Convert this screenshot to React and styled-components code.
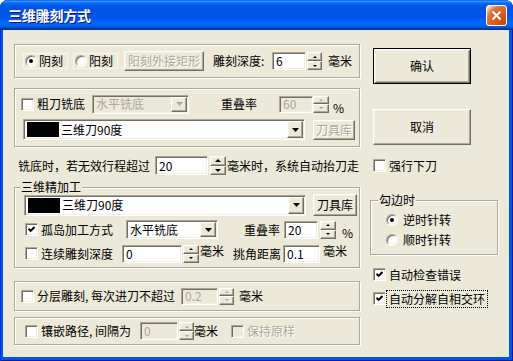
import React from 'react'
import styled, { createGlobalStyle, css } from 'styled-components'

const FONT = `"Noto Sans CJK SC", "Noto Sans", sans-serif`

const GlobalStyle = createGlobalStyle`
  html, body {
    margin: 0;
    padding: 0;
    background: #ffffff;
  }
  body {
    font-family: ${FONT};
    font-size: 12px;
  }
  * {
    box-sizing: border-box;
  }
`

// shared bits
const place = css`
  flex-shrink: 0;
  margin-left: ${p => p.$ml || 0}px;
  margin-top: ${p => p.$mt || 0}px;
`

const sunken = css`
  border: 1px solid;
  border-color: #aca899 #ffffff #ffffff #aca899;
  box-shadow: inset 1px 1px 0 #716f64, inset -1px -1px 0 #f1efe2;
`

const raised = css`
  border: 1px solid;
  border-color: #ffffff #716f64 #716f64 #ffffff;
  box-shadow: inset -1px -1px 0 #aca899, inset 1px 1px 0 #f1efe2;
`

const Window = styled.div`
  width: 513px;
  height: 361px;
  display: flex;
  flex-direction: column;
  background: #0055ea;
  border-radius: 8px 8px 0 0;
  box-shadow: inset 1px 0 0 #0831d9, inset -1px 0 0 #001ea0, inset 0 -1px 0 #001ea0;
  overflow: hidden;
`

const TitleBar = styled.div`
  height: 30px;
  flex-shrink: 0;
  display: flex;
  align-items: center;
  justify-content: space-between;
  padding: 0 6px 0 8px;
  background: linear-gradient(
    to bottom,
    #0058ee 0%,
    #3a93ff 4%,
    #288eff 6%,
    #127dff 8%,
    #036ffc 10%,
    #0262ee 14%,
    #0057e5 20%,
    #0054e3 24%,
    #0055eb 56%,
    #005bf5 66%,
    #026afe 76%,
    #0062ef 86%,
    #0052d6 92%,
    #0040ab 94%,
    #003092 100%
  );
`

const Title = styled.span`
  color: #ffffff;
  font-size: 14px;
  font-weight: 700;
  line-height: 16px;
  letter-spacing: -0.2px;
  text-shadow: 1px 1px 0 #0f1089;
`

const CloseButton = styled.span`
  width: 21px;
  height: 21px;
  border: 1px solid #ffffff;
  border-radius: 3px;
  background: radial-gradient(circle at 90% 90%, #cc4600 0%, #dc6527 55%, #cd7546 70%, #ffccb2 90%, #ffffff 100%);
  display: flex;
  align-items: center;
  justify-content: center;
`

const Client = styled.div`
  flex: 1;
  margin: 0 4px 4px 3px;
  background: #ece9d8;
  display: flex;
`

const LeftCol = styled.div`
  width: 346px;
  margin-left: 11px;
  display: flex;
  flex-direction: column;
`

const RightCol = styled.div`
  width: 128px;
  margin-left: 10px;
  display: flex;
  flex-direction: column;
`

const Group = styled.div`
  ${place};
  position: relative;
  height: ${p => p.$h}px;
  width: 100%;
  border: 1px solid #aca899;
  box-shadow: inset 1px 1px 0 #ffffff, 1px 1px 0 #ffffff;
  display: flex;
  flex-direction: column;
`

const Legend = styled.span`
  position: absolute;
  top: -7px;
  left: ${p => p.$left || 5}px;
  padding: 0 1px;
  background: #ece9d8;
  line-height: 12px;
  font-size: 12px;
  color: #000000;
  white-space: nowrap;
`

const Row = styled.div`
  ${place};
  display: flex;
  align-items: center;
  height: ${p => p.$h}px;
`

const Text = styled.span`
  flex-shrink: 0;
  width: ${p => (p.$w ? `${p.$w}px` : 'auto')};
  margin: ${p => (p.$dy > 0 ? p.$dy * 2 : 0)}px 0 ${p => (p.$dy < 0 ? -p.$dy * 2 : 0)}px ${p => p.$ml || 0}px;
  font-size: 12px;
  line-height: 12px;
  white-space: nowrap;
  color: ${p => (p.$disabled ? '#aca899' : '#000000')};
  text-shadow: ${p => (p.$disabled ? '1px 1px 0 #ffffff' : 'none')};
  ${p =>
    p.$focus &&
    css`
      outline: 1px dotted #000000;
      outline-offset: 2px;
    `}
`

const Option = styled.span`
  ${place};
  width: ${p => p.$w}px;
  height: 16px;
  display: flex;
  align-items: center;
  padding: 0 1px;
  border: 1px solid #f8f7f1;
`

const RadioDot = styled.span`
  ${place};
  width: 12px;
  height: 12px;
  border-radius: 50%;
  border: 1px solid;
  border-color: #aca899 #ffffff #ffffff #aca899;
  box-shadow: inset 1px 1px 0 #716f64, inset -1px -1px 0 #f1efe2;
  background: #ffffff;
  display: flex;
  align-items: center;
  justify-content: center;

  &::after {
    content: '';
    width: 4px;
    height: 4px;
    border-radius: 50%;
    background: ${p => (p.$on ? '#000000' : 'transparent')};
  }
`

const CheckBox = styled.span`
  ${place};
  width: 13px;
  height: 13px;
  ${sunken};
  background: ${p => (p.$disabled ? '#ece9d8' : '#ffffff')};
  display: flex;
  align-items: center;
  justify-content: center;
`

const Edit = styled.span`
  ${place};
  width: ${p => p.$w}px;
  height: ${p => p.$h}px;
  ${sunken};
  background: ${p => (p.$disabled ? '#ece9d8' : '#ffffff')};
  color: ${p => (p.$disabled ? '#aca899' : '#000000')};
  display: flex;
  align-items: center;
  padding-left: 3px;
  font-size: 12px;
  line-height: 12px;
`

const SpinBox = styled.span`
  ${place};
  width: ${p => p.$w || 16}px;
  height: ${p => p.$h}px;
  display: flex;
  flex-direction: column;
`

const SpinHalf = styled.span`
  flex: 1;
  ${raised};
  background: #ece9d8;
  display: flex;
  align-items: center;
  justify-content: center;
`

const Arrow = styled.span`
  width: 0;
  height: 0;
  border-left: ${p => p.$s}px solid transparent;
  border-right: ${p => p.$s}px solid transparent;
  ${p =>
    p.$up
      ? css`
          border-bottom: ${p.$s}px solid ${p.$c};
        `
      : css`
          border-top: ${p.$s}px solid ${p.$c};
        `}
`

const Button = styled.span`
  ${place};
  width: ${p => p.$w}px;
  height: ${p => p.$h}px;
  ${raised};
  background: #ece9d8;
  display: flex;
  align-items: center;
  justify-content: center;
  font-size: 12px;
  line-height: 12px;
  color: ${p => (p.$disabled ? '#aca899' : '#000000')};
  text-shadow: ${p => (p.$disabled ? '1px 1px 0 #ffffff' : 'none')};
  ${p =>
    p.$default &&
    css`
      border-color: #000000;
      box-shadow: inset 1px 1px 0 #ffffff, inset -1px -1px 0 #716f64, inset 2px 2px 0 #f1efe2,
        inset -2px -2px 0 #aca899;
    `}
`

const Combo = styled.span`
  ${place};
  width: ${p => p.$w}px;
  height: ${p => p.$h}px;
  ${sunken};
  background: ${p => (p.$disabled ? '#ece9d8' : '#ffffff')};
  padding: 1px;
  display: flex;
  align-items: center;
`

const ComboText = styled.span`
  flex: 1;
  padding-left: 2px;
  font-size: 12px;
  line-height: 12px;
  white-space: nowrap;
  color: ${p => (p.$disabled ? '#aca899' : '#000000')};
`

const Swatch = styled.span`
  width: 32px;
  height: 15px;
  margin-left: 2px;
  background: #000000;
  flex-shrink: 0;
`

const DropButton = styled.span`
  width: 16px;
  align-self: stretch;
  flex-shrink: 0;
  ${raised};
  background: #ece9d8;
  display: flex;
  align-items: center;
  justify-content: center;
`

const Radio = ({ on, ml, children, textMl = 2 }) => (
  <>
    <RadioDot $on={on} $ml={ml} />
    <Text $ml={textMl}>{children}</Text>
  </>
)

const Check = ({ on, disabled, ml }) => (
  <CheckBox $disabled={disabled} $ml={ml}>
    {on && (
      <svg width="7" height="7" viewBox="0 0 7 7">
        <path d="M0.5 2.8 L2.6 4.9 L6.5 1" stroke="#000" strokeWidth="2" fill="none" />
      </svg>
    )}
  </CheckBox>
)

const Spin = ({ h, w, ml, disabled }) => {
  const c = disabled ? '#aca899' : '#000000'
  const s = h >= 19 ? 3 : 2
  return (
    <SpinBox $h={h} $w={w} $ml={ml}>
      <SpinHalf>
        <Arrow $up $s={s} $c={c} />
      </SpinHalf>
      <SpinHalf>
        <Arrow $s={s} $c={c} />
      </SpinHalf>
    </SpinBox>
  )
}

const DownArrow = ({ disabled }) => (
  <svg width="7" height="4" viewBox="0 0 7 4">
    <path d="M0 0 H7 L3.5 4 Z" fill={disabled ? '#aca899' : '#000'} />
  </svg>
)

const Select = ({ w, h, ml, disabled, children }) => (
  <Combo $w={w} $h={h} $ml={ml} $disabled={disabled}>
    <ComboText $disabled={disabled}>{children}</ComboText>
    <DropButton>
      <DownArrow disabled={disabled} />
    </DropButton>
  </Combo>
)

const ToolSelect = ({ ml }) => (
  <Combo $w={282} $h={21} $ml={ml}>
    <Swatch />
    <ComboText>三维刀90度</ComboText>
    <DropButton>
      <DownArrow />
    </DropButton>
  </Combo>
)

export default function App() {
  return (
    <>
      <GlobalStyle />
      <Window>
        <TitleBar>
          <Title>三维雕刻方式</Title>
          <CloseButton>
            <svg width="11" height="11" viewBox="0 0 11 11">
              <path d="M1.5 1.5 L9.5 9.5 M9.5 1.5 L1.5 9.5" stroke="#fff" strokeWidth="2" />
            </svg>
          </CloseButton>
        </TitleBar>
        <Client>
          <LeftCol>
            <Group $h={34} $mt={14}>
              <Row $h={32}>
                <Option $ml={8} $w={45}>
                  <Radio on>阴刻</Radio>
                </Option>
                <Option $ml={5} $w={45}>
                  <Radio>阳刻</Radio>
                </Option>
                <Button $ml={6} $w={80} $h={20} $disabled>
                  阳刻外接矩形
                </Button>
                <Text $ml={9} $w={56}>
                  雕刻深度:
                </Text>
                <Edit $ml={3} $w={34} $h={18}>
                  6
                </Edit>
                <Spin ml={1} w={15} h={18} />
                <Text $ml={6}>毫米</Text>
              </Row>
            </Group>

            <Group $h={59} $mt={10}>
              <Row $h={20} $mt={5}>
                <Check ml={6} />
                <Text $ml={3} $w={48}>
                  粗刀铣底
                </Text>
                <Select ml={7} w={97} h={19} disabled>
                  水平铣底
                </Select>
                <Text $ml={32} $w={36}>
                  重叠率
                </Text>
                <Edit $ml={22} $w={34} $h={17} $disabled>
                  60
                </Edit>
                <Spin ml={0} w={16} h={17} disabled />
                <Text $ml={4} $dy={4}>
                  %
                </Text>
              </Row>
              <Row $h={21} $mt={5}>
                <ToolSelect ml={8} />
                <Button $ml={8} $w={42} $h={20} $disabled>
                  刀具库
                </Button>
              </Row>
            </Group>

            <Row $h={21} $mt={8}>
              <Text $ml={4} $w={132}>
                铣底时，若无效行程超过
              </Text>
              <Edit $ml={5} $w={53} $h={19}>
                20
              </Edit>
              <Spin ml={2} w={16} h={19} />
              <Text $ml={1}>毫米时，系统自动抬刀走</Text>
            </Row>

            <Group $h={81} $mt={11}>
              <Legend>三维精加工</Legend>
              <Row $h={22} $mt={6}>
                <ToolSelect ml={9} />
                <Button $ml={7} $w={44} $h={22}>
                  刀具库
                </Button>
              </Row>
              <Row $h={19} $mt={4}>
                <Check ml={10} on />
                <Text $ml={3} $w={72}>
                  孤岛加工方式
                </Text>
                <Select ml={13} w={92} h={19}>
                  水平铣底
                </Select>
                <Text $ml={26} $w={36}>
                  重叠率
                </Text>
                <Edit $ml={4} $w={34} $h={18}>
                  20
                </Edit>
                <Spin ml={2} w={16} h={18} />
                <Text $ml={6} $dy={3}>
                  %
                </Text>
              </Row>
              <Row $h={19} $mt={5}>
                <Check ml={10} />
                <Text $ml={3} $w={72}>
                  连续雕刻深度
                </Text>
                <Edit $ml={9} $w={60} $h={18}>
                  0
                </Edit>
                <Spin ml={1} w={16} h={18} />
                <Text $ml={1} $w={24} $dy={-3}>
                  毫米
                </Text>
                <Text $ml={9} $w={48}>
                  挑角距离
                </Text>
                <Edit $ml={2} $w={37} $h={18}>
                  0.1
                </Edit>
                <Text $ml={3} $dy={-3}>
                  毫米
                </Text>
              </Row>
            </Group>

            <Group $h={30} $mt={13}>
              <Row $h={28}>
                <Check ml={6} />
                <Text $ml={3} $w={140}>
                  分层雕刻, 每次进刀不超过
                </Text>
                <Edit $ml={4} $w={37} $h={17} $disabled>
                  0.2
                </Edit>
                <Spin ml={1} w={15} h={17} disabled />
                <Text $ml={5}>毫米</Text>
              </Row>
            </Group>

            <Group $h={28} $mt={6}>
              <Row $h={26}>
                <Check ml={10} />
                <Text $ml={3} $w={92}>
                  镶嵌路径, 间隔为
                </Text>
                <Edit $ml={7} $w={38} $h={18} $disabled>
                  0
                </Edit>
                <Spin ml={1} w={15} h={18} disabled />
                <Text $w={24}>毫米</Text>
                <Check ml={13} disabled />
                <Text $ml={3} $disabled>
                  保持原样
                </Text>
              </Row>
            </Group>
          </LeftCol>

          <RightCol>
            <Button $ml={3} $mt={18} $w={98} $h={36} $default>
              确认
            </Button>
            <Button $ml={3} $mt={25} $w={98} $h={36}>
              取消
            </Button>
            <Row $h={13} $mt={14}>
              <Check ml={3} />
              <Text $ml={3}>强行下刀</Text>
            </Row>
            <Group $h={55} $mt={28}>
              <Legend $left={7}>勾边时</Legend>
              <Row $h={12} $mt={13}>
                <Radio on ml={15} textMl={5}>
                  逆时针转
                </Radio>
              </Row>
              <Row $h={12} $mt={8}>
                <Radio ml={15} textMl={5}>
                  顺时针转
                </Radio>
              </Row>
            </Group>
            <Row $h={13} $mt={13}>
              <Check ml={3} on />
              <Text $ml={3}>自动检查错误</Text>
            </Row>
            <Row $h={13} $mt={11}>
              <Check ml={3} on />
              <Text $ml={3} $focus>
                自动分解自相交环
              </Text>
            </Row>
          </RightCol>
        </Client>
      </Window>
    </>
  )
}
